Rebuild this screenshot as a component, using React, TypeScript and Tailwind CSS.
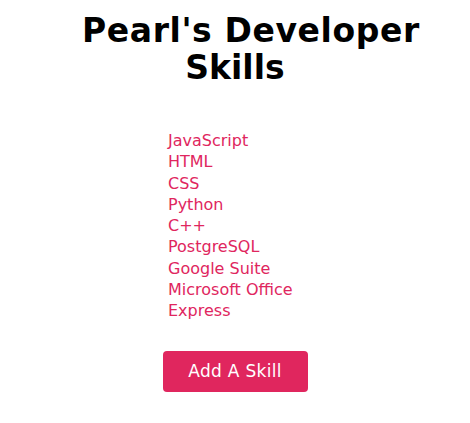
const skills = [
  "JavaScript",
  "HTML",
  "CSS",
  "Python",
  "C++",
  "PostgreSQL",
  "Google Suite",
  "Microsoft Office",
  "Express",
];

export default function App() {
  return (
    <div className="min-h-[423px] w-full bg-white font-['DejaVu_Sans',sans-serif]">
      <h1 className="mx-auto w-[306px] pt-[12px] text-center text-[33px] font-bold leading-[37px] text-black">
        <span className="whitespace-nowrap tracking-[0.6px]">Pearl's Developer</span> Skills
      </h1>
      <div className="mt-[44px] flex justify-center">
        <ul className="w-[134px] text-[16px] leading-[21.25px] text-[#e0265e]">
          {skills.map((skill) => (
            <li key={skill} className="whitespace-nowrap">
              {skill}
            </li>
          ))}
        </ul>
      </div>
      <div className="mt-[30px] flex justify-center">
        <button className="h-[41px] w-[145px] rounded-[4px] bg-[#e0265e] text-[17px] tracking-[0.3px] text-white">
          Add A Skill
        </button>
      </div>
    </div>
  );
}
